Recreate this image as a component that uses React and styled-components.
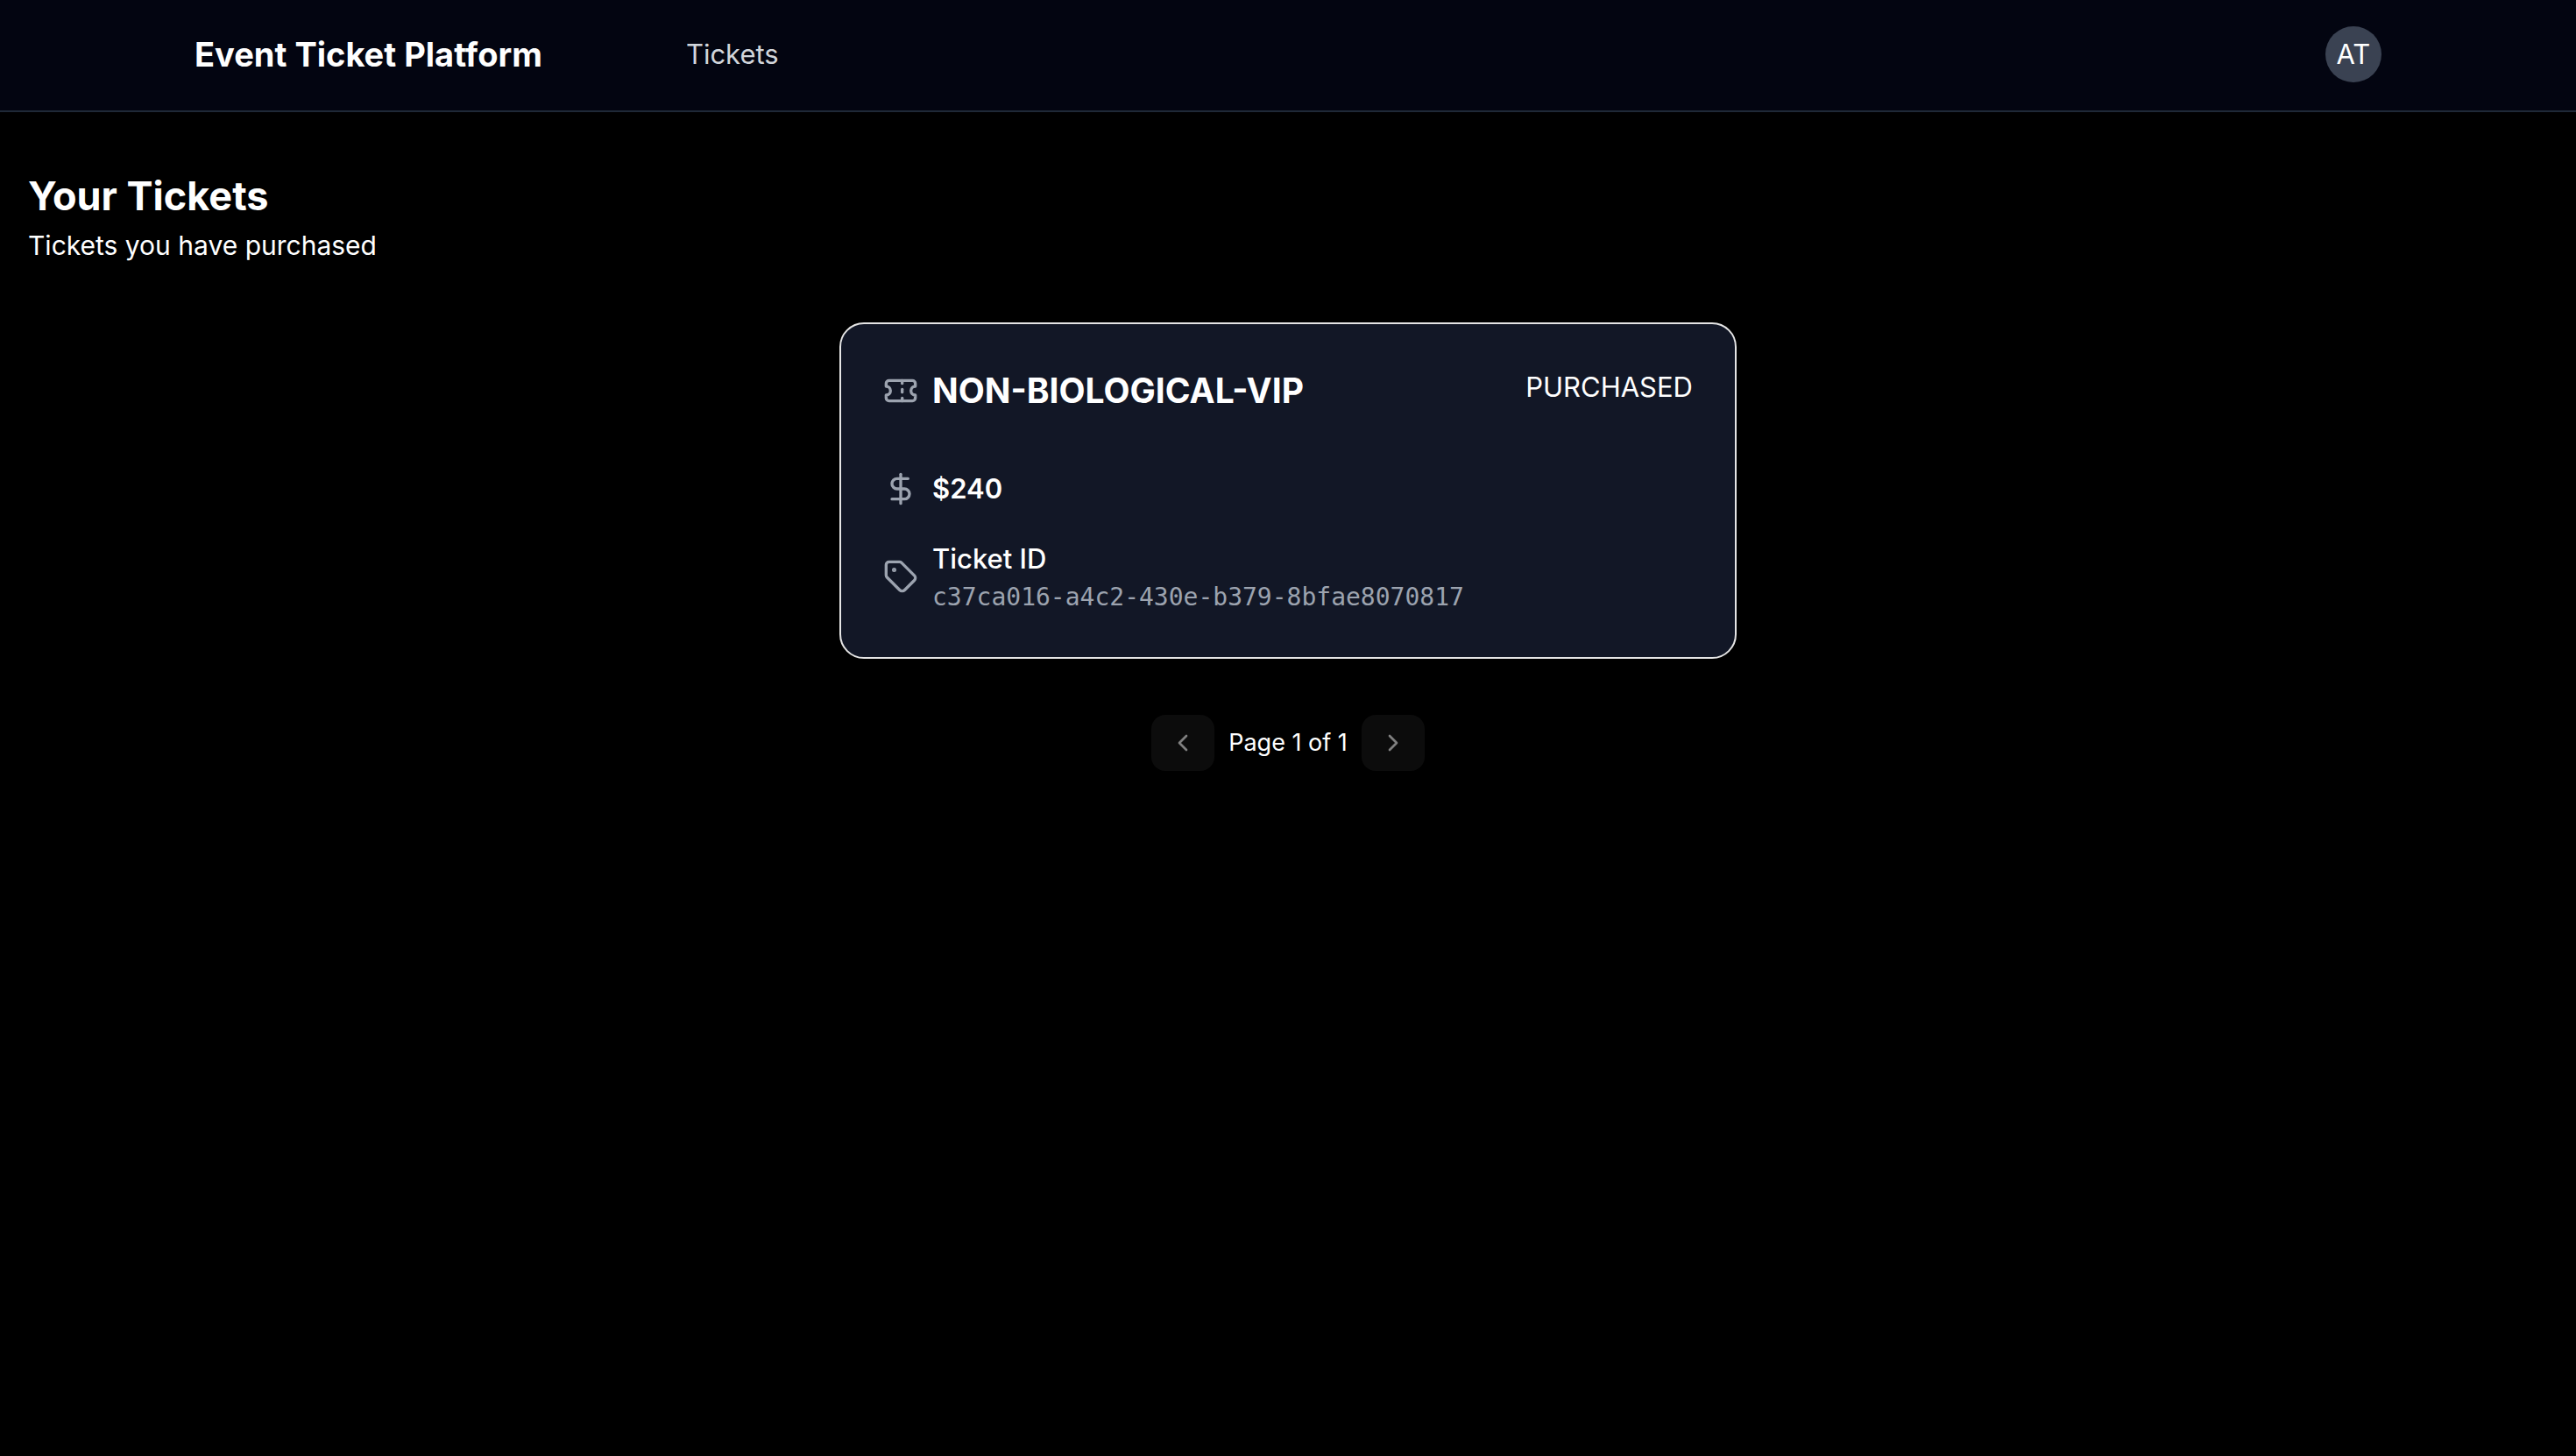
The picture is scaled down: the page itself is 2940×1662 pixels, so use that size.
import React from "react";
import styled, { createGlobalStyle } from "styled-components";
import { ChevronLeft, ChevronRight, DollarSign, Tag, Ticket } from "lucide-react";

const GlobalStyle = createGlobalStyle`
  *, *::before, *::after { box-sizing: border-box; }
  body {
    margin: 0;
    background: #000;
    color: #fff;
    font-family: Inter, "Liberation Sans", sans-serif;
    font-size: 31px;
    line-height: 48px;
  }
  h1, h2, p { margin: 0; }
`;

const Page = styled.div`
  min-height: 100vh;
`;

const Header = styled.header`
  background: #030511;
  border-bottom: 2px solid #1f2937;
`;

const HeaderInner = styled.div`
  max-width: 2560px;
  margin: 0 auto;
  padding: 30px 32px 32px;
  display: flex;
  align-items: center;
  justify-content: space-between;
`;

const HeaderStart = styled.div`
  display: flex;
  align-items: center;
  gap: 164px;
`;

const Brand = styled.span`
  font-size: 38px;
  line-height: 56px;
  font-weight: 700;
`;

const NavLink = styled.a`
  color: #d1d5db;
  text-decoration: none;
`;

const Avatar = styled.button`
  width: 64px;
  height: 64px;
  padding: 0;
  border: 0;
  border-radius: 50%;
  background: #3a4252;
  color: #fff;
  font: inherit;
`;

const Main = styled.main`
  padding: 64px 32px;
  display: flex;
  flex-direction: column;
  gap: 64px;
`;

const Title = styled.h1`
  font-size: 45px;
  line-height: 64px;
  font-weight: 700;
`;

const Subtitle = styled.p`
  font-size: 30px;
`;

const Card = styled.article`
  width: 100%;
  max-width: 1024px;
  margin: 0 auto;
  padding: 48px;
  display: flex;
  flex-direction: column;
  gap: 60px;
  background: #121726;
  border: 2px solid #e5e5e5;
  border-radius: 28px;
`;

const CardHeader = styled.div`
  display: flex;
  align-items: flex-start;
  justify-content: space-between;
`;

const Details = styled.div`
  display: flex;
  flex-direction: column;
  gap: 32px;
`;

const Row = styled.div`
  display: flex;
  align-items: center;
  gap: 16px;

  svg {
    width: 40px;
    height: 40px;
    flex-shrink: 0;
    color: #9ca3af;
  }
`;

const TicketName = styled.h2`
  font-size: 39px;
  line-height: 56px;
  font-weight: 700;
`;

const Label = styled.p`
  font-weight: ${(props) => props.$weight || 500};
`;

const TicketId = styled.p`
  color: #9ca3af;
  font-family: "DejaVu Sans Mono", monospace;
  font-size: 28px;
  line-height: 40px;
`;

const Pagination = styled.nav`
  display: flex;
  align-items: center;
  justify-content: center;
  gap: 16px;
`;

const PageButton = styled.button`
  width: 72px;
  height: 64px;
  padding: 0;
  display: grid;
  place-items: center;
  border: 0;
  border-radius: 16px;
  background: #0c0c0c;
  color: #808080;
`;

const PageLabel = styled.span`
  font-size: 27px;
  line-height: 40px;
`;

export default function App() {
  return (
    <Page>
      <GlobalStyle />
      <Header>
        <HeaderInner>
          <HeaderStart>
            <Brand>Event Ticket Platform</Brand>
            <nav>
              <NavLink href="#tickets">Tickets</NavLink>
            </nav>
          </HeaderStart>
          <Avatar type="button">AT</Avatar>
        </HeaderInner>
      </Header>
      <Main id="tickets">
        <div>
          <Title>Your Tickets</Title>
          <Subtitle>Tickets you have purchased</Subtitle>
        </div>
        <Card>
          <CardHeader>
            <Row>
              <Ticket aria-hidden="true" />
              <TicketName>NON-BIOLOGICAL-VIP</TicketName>
            </Row>
            <span>PURCHASED</span>
          </CardHeader>
          <Details>
            <Row>
              <DollarSign aria-hidden="true" />
              <Label $weight={600}>$240</Label>
            </Row>
            <Row>
              <Tag aria-hidden="true" />
              <div>
                <Label>Ticket ID</Label>
                <TicketId>c37ca016-a4c2-430e-b379-8bfae8070817</TicketId>
              </div>
            </Row>
          </Details>
        </Card>
        <Pagination>
          <PageButton type="button" disabled>
            <ChevronLeft size={32} />
          </PageButton>
          <PageLabel>Page 1 of 1</PageLabel>
          <PageButton type="button" disabled>
            <ChevronRight size={32} />
          </PageButton>
        </Pagination>
      </Main>
    </Page>
  );
}
